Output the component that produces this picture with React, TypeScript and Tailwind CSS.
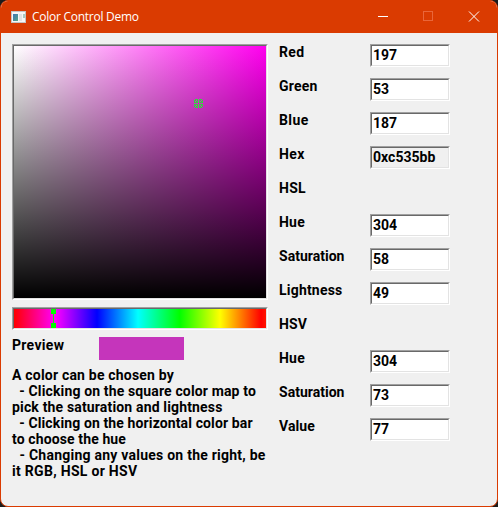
import React from "react";

const sunken =
  "border border-t-[#a0a0a0] border-l-[#a0a0a0] border-r-white border-b-white";
const sunkenInner =
  "border border-t-[#696969] border-l-[#696969] border-r-[#e3e3e3] border-b-[#e3e3e3]";

type Field = { label: string; value?: string; readOnly?: boolean; tracking: string };

const fields: Field[] = [
  { label: "Red", value: "197", tracking: "tracking-[0.3px]" },
  { label: "Green", value: "53", tracking: "tracking-[0.2px]" },
  { label: "Blue", value: "187", tracking: "tracking-[0.4px]" },
  { label: "Hex", value: "0xc535bb", readOnly: true, tracking: "tracking-[0.4px]" },
  { label: "HSL", tracking: "tracking-[0.3px]" },
  { label: "Hue", value: "304", tracking: "tracking-[0.2px]" },
  { label: "Saturation", value: "58", tracking: "tracking-[0.02px]" },
  { label: "Lightness", value: "49", tracking: "tracking-[0.2px]" },
  { label: "HSV", tracking: "tracking-[0.1px]" },
  { label: "Hue", value: "304", tracking: "tracking-[0.2px]" },
  { label: "Saturation", value: "73", tracking: "tracking-[0.02px]" },
  { label: "Value", value: "77", tracking: "tracking-[0.1px]" },
];

const help = [
  { text: "A color can be chosen by", tracking: "tracking-[0.2px]" },
  { text: "  - Clicking on the square color map to", tracking: "tracking-[0.14px]" },
  { text: "pick the saturation and lightness", tracking: "tracking-[0.16px]" },
  { text: "  - Clicking on the horizontal color bar", tracking: "tracking-[0.12px]" },
  { text: "to choose the hue", tracking: "tracking-[0.12px]" },
  { text: "  - Changing any values on the right, be", tracking: "tracking-[0.24px]" },
  { text: "it RGB, HSL or HSV", tracking: "tracking-[0.3px]" },
];

function TitleBar() {
  return (
    <header className="flex h-8 items-center bg-[#da3b01] pl-[10px] text-white">
      <svg width="15" height="12" viewBox="0 0 15 12" shapeRendering="crispEdges">
        <defs>
          <linearGradient id="screen" x1="0" y1="0" x2="1" y2="1">
            <stop offset="0" stopColor="#4274b4" />
            <stop offset="1" stopColor="#55a585" />
          </linearGradient>
        </defs>
        <rect width="15" height="12" fill="#c4c4c4" />
        <rect x="1" y="1" width="13" height="10" fill="#f6f6f6" />
        <rect x="2" y="3" width="5" height="7" fill="url(#screen)" />
        <rect x="8" y="3" width="3" height="7" fill="#e2e2e2" />
        <rect x="12" y="3" width="2" height="4" fill="#a9c9bf" />
      </svg>
      <span className="ml-[6px] grow font-['Open_Sans',sans-serif] text-[12px] leading-4 tracking-[-0.26px] whitespace-nowrap">
        Color Control Demo
      </span>
      <svg width="120" height="32" viewBox="377 0 120 32" fill="none" shapeRendering="crispEdges">
        <path d="M378 15.5h10" stroke="#fff" />
        <rect x="423.5" y="10.5" width="9" height="9" stroke="#e9663a" />
        <path d="M469 10.5l10 10m0-10l-10 10" stroke="#fff" shapeRendering="auto" />
      </svg>
    </header>
  );
}

function SaturationMap() {
  return (
    <div className={`h-64 w-64 ${sunken}`}>
      <div className={`h-full ${sunkenInner}`}>
        <div className="relative h-full bg-[linear-gradient(to_top,#000,transparent),linear-gradient(to_right,#fff,#ff00ee)]">
          <svg
            className="absolute top-[53px] left-[180px]"
            width="9"
            height="9"
            viewBox="0 0 9 9"
            fill="#3aca44"
            shapeRendering="crispEdges"
          >
            <path d="M1 0h3v1h-3zM0 1h2v1h-2zM3 1h1v1h-1zM0 2h1v1h-1zM2 2h2v1h-2zM0 3h4v1h-4z" />
            <path d="M5 0h3v1h-3zM5 1h2v1h-2zM8 1h1v1h-1zM5 2h1v1h-1zM7 2h2v1h-2zM5 3h4v1h-4z" />
            <path d="M0 5h4v1h-4zM0 6h2v1h-2zM3 6h1v1h-1zM0 7h1v1h-1zM2 7h2v1h-2zM1 8h3v1h-3z" />
            <path d="M5 5h4v1h-4zM5 6h1v1h-1zM7 6h2v1h-2zM5 7h2v1h-2zM8 7h1v1h-1zM5 8h3v1h-3z" />
          </svg>
        </div>
      </div>
    </div>
  );
}

function HueBar() {
  return (
    <div className={`mt-[7px] h-[23px] w-64 ${sunken}`}>
      <div className={`h-full ${sunkenInner}`}>
        <div className="h-full bg-[linear-gradient(to_right,#f00_0px,#f0f_41.5px,#00f_83px,#0ff_124px,#0f0_165.5px,#ff0_206px,#f00_247px,#ff1400_252px)]">
          <div className="ml-[37px] flex h-full w-[5px] flex-col items-center">
            <div className="h-[5px] w-[5px] bg-[#00ff00]" />
            <div className="w-px grow bg-[#22dd22]" />
            <div className="h-[5px] w-[5px] bg-[#00ff00]" />
          </div>
        </div>
      </div>
    </div>
  );
}

function FieldRow({ field }: { field: Field }) {
  return (
    <div className="flex h-[34px] items-start">
      <div className={`w-[91px] leading-4 ${field.tracking}`}>{field.label}</div>
      {field.value && (
        <div className={`h-[23px] w-20 ${sunken}`}>
          <div
            className={`h-full pt-px pl-px tracking-[0.03px] ${sunkenInner} ${field.readOnly ? "bg-[#f0f0f0]" : "bg-white"}`}
          >
            {field.value}
          </div>
        </div>
      )}
    </div>
  );
}

export default function App() {
  return (
    <div className="h-[507px] w-[498px] bg-[#1b1b1b]">
      <div className="flex h-full flex-col overflow-hidden rounded-lg border border-[#da3b01] bg-[#f0f0f0]">
        <TitleBar />
        <main className="flex grow pt-[11px] pl-[11px] font-['Roboto',sans-serif] text-[14px] leading-4 font-bold text-black">
          <section className="w-[267px]">
            <SaturationMap />
            <HueBar />
            <div className="mt-[7px] flex h-[23px]">
              <div className="w-[87px] tracking-[0.3px]">Preview</div>
              <div className="h-full w-[85px] bg-[#c535bb]" />
            </div>
            <div className="mt-[7px]">
              {help.map((line) => (
                <p key={line.text} className={`h-4 whitespace-pre ${line.tracking}`}>
                  {line.text}
                </p>
              ))}
            </div>
          </section>
          <section>
            {fields.map((field, i) => (
              <FieldRow key={i} field={field} />
            ))}
          </section>
        </main>
      </div>
    </div>
  );
}
